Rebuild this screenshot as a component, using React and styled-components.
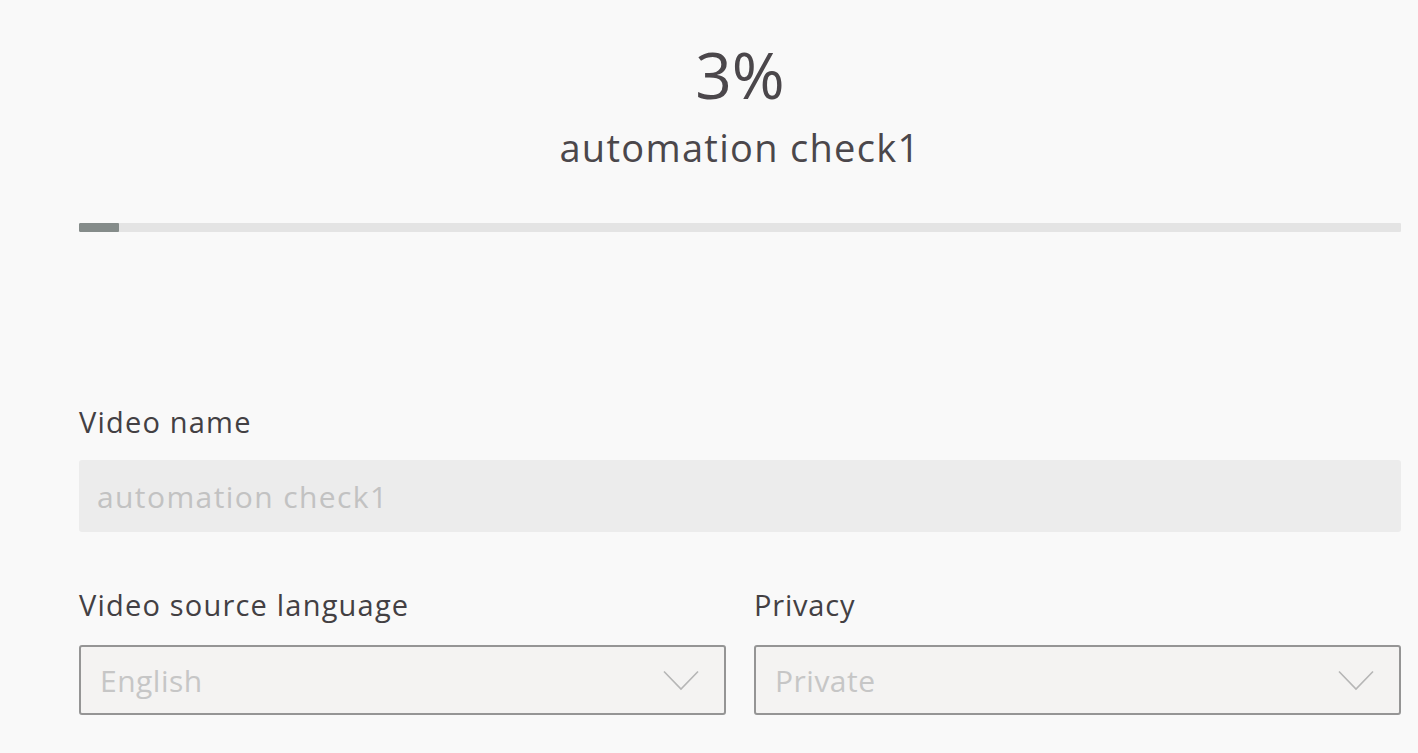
import React from "react";
import styled, { createGlobalStyle } from "styled-components";

const Global = createGlobalStyle`
  html, body { margin: 0; padding: 0; background: #f9f9f9; }
  body { font-family: "Open Sans", "Noto Sans", sans-serif; }
  * { box-sizing: border-box; }
`;

const Page = styled.div`
  width: 1418px;
  height: 753px;
  overflow: hidden;
  padding: 43px 17px 0 79px;
  display: flex;
  flex-direction: column;
`;

const Header = styled.div`
  display: flex;
  flex-direction: column;
  align-items: center;
  color: #4b474b;
`;

const Percent = styled.div`
  font-size: 64px;
  line-height: 64px;
  font-weight: 400;
`;

const Title = styled.div`
  margin-top: 20px;
  font-size: 38px;
  line-height: 41px;
  letter-spacing: 1.3px;
`;

const Track = styled.div`
  margin-top: 55px;
  height: 9px;
  background: #e4e4e4;
  border-radius: 1px;
  overflow: hidden;
`;

const Fill = styled.div`
  height: 100%;
  background: #858c8a;
  border-radius: 1px;
`;

const Label = styled.div`
  font-size: 29px;
  line-height: 31px;
  letter-spacing: ${(p) => p.$spacing ?? 1.2}px;
  color: #434043;
  margin-top: ${(p) => p.$top}px;
`;

const TextInput = styled.div`
  margin-top: 23px;
  height: 72px;
  background: #ececec;
  border-radius: 3px;
  padding: 0 18px;
  display: flex;
  align-items: center;
  font-size: 30px;
  letter-spacing: 1.4px;
  color: #c2c2c2;
`;

const Row = styled.div`
  display: grid;
  grid-template-columns: 1fr 1fr;
  column-gap: 28px;
  margin-top: 57px;
`;

const Field = styled.div`
  display: flex;
  flex-direction: column;
`;

const Select = styled.div`
  margin-top: 25px;
  height: 70px;
  border: 2px solid #959595;
  border-radius: 3px;
  background: #f4f3f2;
  display: flex;
  align-items: center;
  justify-content: space-between;
  padding: 0 25px 0 19px;
  font-size: 30px;
  letter-spacing: 0.5px;
  color: #c6c6c6;
`;

const Chevron = () => (
  <svg width="36" height="21" viewBox="0 0 36 21" fill="none">
    <path d="M1 1.5 L18 19 L35 1.5" stroke="#b6b6b6" strokeWidth="1.6" />
  </svg>
);

export default function App() {
  const pct = 3;
  return (
    <>
      <Global />
      <Page>
        <Header>
          <Percent>{pct}%</Percent>
          <Title>automation check1</Title>
        </Header>
        <Track>
          <Fill style={{ width: `${pct}%` }} />
        </Track>
        <Label $top={174}>Video name</Label>
        <TextInput>automation check1</TextInput>
        <Row>
          <Field>
            <Label $top={0}>Video source language</Label>
            <Select>
              English
              <Chevron />
            </Select>
          </Field>
          <Field>
            <Label $top={0} $spacing={0.8}>Privacy</Label>
            <Select>
              Private
              <Chevron />
            </Select>
          </Field>
        </Row>
      </Page>
    </>
  );
}
